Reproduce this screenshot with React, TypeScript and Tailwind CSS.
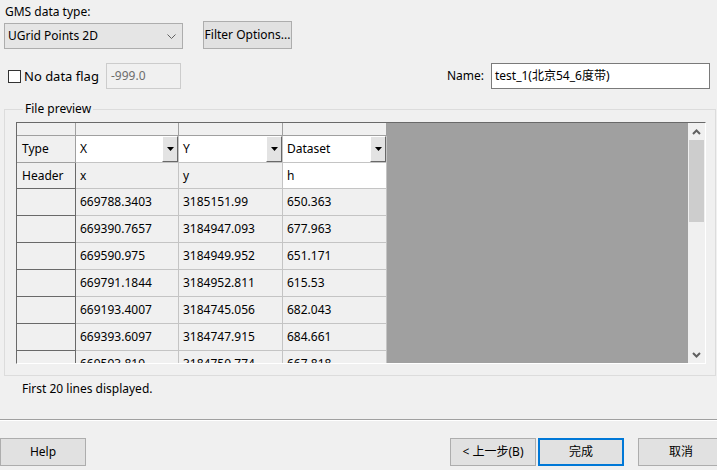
import React from 'react';

const rows: string[][] = [
  ['669788.3403', '3185151.99', '650.363'],
  ['669390.7657', '3184947.093', '677.963'],
  ['669590.975', '3184949.952', '651.171'],
  ['669791.1844', '3184952.811', '615.53'],
  ['669193.4007', '3184745.056', '682.043'],
  ['669393.6097', '3184747.915', '684.661'],
  ['669593.819', '3184750.774', '667.818'],
];

const colW = ['w-[103px]', 'w-[104px]', 'w-[104px]'];

const DropBtn = () => (
  <div className="w-[16px] h-full flex items-center justify-center bg-[#e3e3e3] border-t border-l border-white border-r border-b border-r-[#696969] border-b-[#696969]">
    <svg width="7" height="4" viewBox="0 0 7 4">
      <polygon points="0,0 7,0 3.5,4" fill="#000" />
    </svg>
  </div>
);

const Chevron = ({ up }: { up?: boolean }) => (
  <svg width="9" height="6" viewBox="0 0 9 6">
    <polyline
      points={up ? '1,5 4.5,1.5 8,5' : '1,1 4.5,4.5 8,1'}
      fill="none"
      stroke="#606060"
      strokeWidth="2"
    />
  </svg>
);

const Btn = ({ children, primary }: { children: React.ReactNode; primary?: boolean }) => (
  <div
    className={
      'w-[86px] h-[28px] shrink-0 flex items-center justify-center bg-[#e1e1e1] ' +
      (primary ? 'border-2 border-[#0078d7]' : 'border border-[#adadad]')
    }
  >
    {children}
  </div>
);

export default function App() {
  return (
    <div className="relative w-[717px] h-[470px] overflow-hidden bg-[#f0f0f0] text-[12px] leading-[16px] text-black font-['Noto_Sans','Noto_Sans_CJK_SC',sans-serif]">
      <div className="pl-[5px] pt-[4px]">GMS data type:</div>

      <div className="mt-[1px] flex items-start">
        <div className="ml-[4px] mt-[2px] w-[179px] h-[26px] bg-[#e5e5e5] border border-[#adadad] flex items-center pl-[3px] pr-[6px]">
          <span className="flex-1">UGrid Points 2D</span>
          <svg width="9" height="5" viewBox="0 0 9 5">
            <polyline points="0.5,0.5 4.5,4.5 8.5,0.5" fill="none" stroke="#606060" strokeWidth="1" />
          </svg>
        </div>
        <div className="ml-[20px] w-[89px] h-[28px] bg-[#e1e1e1] border border-[#adadad] flex items-center justify-center">
          Filter Options...
        </div>
      </div>

      <div className="mt-[14px] h-[26px] flex items-center">
        <div className="ml-[8px] w-[13px] h-[13px] bg-white border border-[#333333]" />
        <span className="ml-[3px] w-[82px] text-[13px]">No data flag</span>
        <div className="w-[75px] h-[26px] border border-[#cccccc] flex items-center pl-[4px] text-[#6d6d6d]">
          -999.0
        </div>
        <div className="flex-1" />
        <span>Name:</span>
        <div className="ml-[7px] mr-[7px] w-[219px] h-[26px] bg-white border border-[#7a7a7a] flex items-center pl-[3px]">
          test_1(北京54_6度带)
        </div>
      </div>

      <fieldset className="mt-[12px] ml-[4px] w-[712px] border border-[#dcdcdc] pl-[11px] pt-[5px] pb-[11px]">
        <legend className="ml-[7px] px-[2px] leading-[16px]">File preview</legend>

        <div className="w-[690px] h-[242px] flex border-t border-l border-[#696969] border-r border-b border-r-white border-b-white">
          <div className="w-[370px] shrink-0 overflow-hidden bg-[#f0f0f0]">
            {/* column header row */}
            <div className="flex h-[13px]">
              <div className="w-[59px] border-r border-b border-[#a0a0a0]" />
              {colW.map((w, i) => (
                <div key={i} className={w + ' border-r border-b border-[#a0a0a0]'} />
              ))}
            </div>

            {/* type row */}
            <div className="flex h-[27px]">
              <div className="w-[59px] border-r border-b border-[#a0a0a0] flex items-center pl-[5px]">Type</div>
              {['X', 'Y', 'Dataset'].map((t, i) => (
                <div key={t} className={colW[i] + ' border-r border-b border-[#c4c4c4] bg-white flex items-center'}>
                  <span className="flex-1 pl-[4px]">{t}</span>
                  <DropBtn />
                </div>
              ))}
            </div>

            {/* header row */}
            <div className="flex h-[26px]">
              <div className="w-[59px] border-r border-b border-[#696969] flex items-center pl-[5px]">Header</div>
              {['x', 'y', 'h'].map((t, i) => (
                <div
                  key={t}
                  className={colW[i] + ' border-r border-b border-[#c4c4c4] flex items-center pl-[4px] ' + (i === 2 ? 'bg-white' : '')}
                >
                  {t}
                </div>
              ))}
            </div>

            {rows.map((r, ri) => (
              <div key={ri} className="flex h-[27px]">
                <div className="w-[59px] border-r border-b border-[#696969]" />
                {r.map((v, i) => (
                  <div key={i} className={colW[i] + ' border-r border-b border-[#c4c4c4] flex items-center pl-[4px]'}>
                    {v}
                  </div>
                ))}
              </div>
            ))}
          </div>

          <div className="flex-1 bg-[#a0a0a0]" />

          <div className="w-[17px] shrink-0 bg-[#f0f0f0] flex flex-col">
            <div className="h-[17px] flex items-center justify-center">
              <Chevron up />
            </div>
            <div className="mx-[1px] h-[82px] bg-[#cdcdcd]" />
            <div className="flex-1" />
            <div className="h-[17px] flex items-center justify-center">
              <Chevron />
            </div>
          </div>
        </div>
      </fieldset>

      <div className="mt-[5px] pl-[22px]">First 20 lines displayed.</div>

      <div className="mt-[22px] h-[1px] bg-[#a0a0a0]" />
      <div className="h-[1px] bg-white" />

      <div className="mt-[17px] flex items-center">
        <Btn>Help</Btn>
        <div className="flex-1" />
        <Btn>&lt; 上一步(B)</Btn>
        <div className="ml-[2px]">
          <Btn primary>完成</Btn>
        </div>
        <div className="ml-[14px] mr-[-7px]">
          <Btn>取消</Btn>
        </div>
      </div>
    </div>
  );
}
